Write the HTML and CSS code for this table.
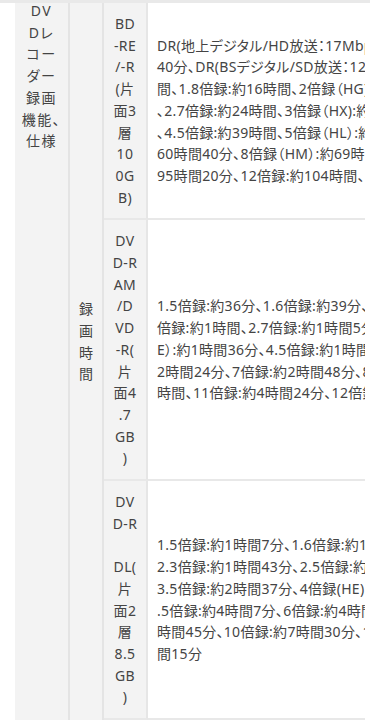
FILE: index.html
```html
<!DOCTYPE html>
<html lang="ja">
<head>
<meta charset="utf-8">
<title>DVDレコーダー録画機能、仕様</title>
<link rel="stylesheet" href="styles.css">
</head>
<body>
<div class="topline"></div>
<div class="frame">
  <div class="scroller">
    <table class="spec">
      <colgroup>
        <col class="c-cat">
        <col class="c-sub">
        <col class="c-media">
        <col class="c-val">
      </colgroup>
      <tbody>
        <tr>
          <th class="cat" rowspan="3"><div class="cat-text">DV<br>Dレ<br>コー<br>ダー<br>録画<br>機能、<br>仕様</div></th>
          <th class="sub" rowspan="3">録画時間</th>
          <th class="media">BD<br>-RE<br>/-R<br>(片<br>面3<br>層<br>10<br>0G<br>B)</th>
          <td class="val">
            <span class="ln">DR(地上デジタル/HD放送：17Mbps時)：約12時間</span>
            <span class="ln">40分、DR(BSデジタル/SD放送：12Mbps時)：約17時</span>
            <span class="ln">間、1.8倍録:約16時間、2倍録（HG)：約18時間、2.5倍録:約22時</span>
            <span class="ln">、2.7倍録:約24時間、3倍録（HX):約26時間、4倍録（HE）:約35時間</span>
            <span class="ln">、4.5倍録:約39時間、5倍録（HL）:約44時間、7倍録:約</span>
            <span class="ln">60時間40分、8倍録（HM）:約69時間20分、11倍録:約</span>
            <span class="ln">95時間20分、12倍録:約104時間、15倍録（HZ）:約130時間</span>
          </td>
        </tr>
        <tr>
          <th class="media">DV<br>D-R<br>AM<br>/D<br>VD<br>-R(<br>片<br>面4<br>.7<br>GB<br>)</th>
          <td class="val">
            <span class="ln">1.5倍録:約36分、1.6倍録:約39分、2倍録（HG）:約48分、2.3</span>
            <span class="ln">倍録:約1時間、2.7倍録:約1時間5分、3倍録（HX）:約1時間12分、4倍録（H</span>
            <span class="ln">E）:約1時間36分、4.5倍録:約1時間48分、5倍録（HL）:約</span>
            <span class="ln">2時間24分、7倍録:約2時間48分、8倍録（HM）:約3時間12分、10倍録:約4</span>
            <span class="ln">時間、11倍録:約4時間24分、12倍録:約4時間48分、15倍録（HZ）:約6時間</span>
          </td>
        </tr>
        <tr>
          <th class="media">DV<br>D-R<br>　<br>DL(<br>片<br>面2<br>層<br>8.5<br>GB<br>)</th>
          <td class="val">
            <span class="ln">1.5倍録:約1時間7分、1.6倍録:約1時間11分、2倍録(HG):約1時間30分、</span>
            <span class="ln">2.3倍録:約1時間43分、2.5倍録:約1時間52分、3倍録(HX):約2時間15分、</span>
            <span class="ln">3.5倍録:約2時間37分、4倍録(HE):約3時間、5</span>
            <span class="ln">.5倍録:約4時間7分、6倍録:約4時間30分、7倍録:約5</span>
            <span class="ln">時間45分、10倍録:約7時間30分、12倍録:約9時間、15倍録(HZ):約11時</span>
            <span class="ln">間15分</span>
          </td>
        </tr>
      </tbody>
    </table>
  </div>
  <div class="thumb"></div>
</div>
</body>
</html>
```

FILE: styles.css
```css
html, body {
  margin: 0;
  padding: 0;
  background: #ffffff;
}

body {
  font-family: "Noto Sans", "Noto Sans CJK JP", sans-serif;
  font-size: 14px;
  font-feature-settings: "palt" 1;
  color: #444444;
  overflow: hidden;
}

.topline {
  height: 3px;
  margin-right: 8px;
  background: #e9e9e9;
}

.frame {
  position: relative;
  margin: 0 13px 0 15px;
}

.scroller {
  overflow: hidden;
}

.spec {
  table-layout: fixed;
  width: 560px;
  border-collapse: separate;
  border-spacing: 0;
  line-height: 21.7px;
}

.c-cat { width: 55px; }
.c-sub { width: 34px; }
.c-media { width: 44px; }
.c-val { width: 427px; }

.spec th {
  font-weight: normal;
  background: #f3f3f3;
  text-align: center;
}

.cat {
  vertical-align: top;
  padding: 0;
  border-right: 2px solid #e4e4e4;
  letter-spacing: 1.5px;
}

.cat-text {
  margin-top: -3px;
}

.sub {
  vertical-align: middle;
  padding: 0 9px 40px;
  border-right: 2px solid #e4e4e4;
}

.media {
  vertical-align: middle;
  padding: 10px 0;
  letter-spacing: 0.4px;
  border-right: 2px solid #e6e6e6;
  border-bottom: 2px solid #e8e8e8;
}

.val {
  vertical-align: middle;
  padding: 10px 0 10px 9px;
  letter-spacing: 0.3px;
  border-bottom: 2px solid #e8e8e8;
  background: #ffffff;
}

.ln {
  display: block;
  white-space: nowrap;
}

.thumb {
  position: absolute;
  right: 2px;
  bottom: -3px;
  width: 45px;
  height: 3px;
  border-radius: 2px;
  background: #a9a9a9;
}
```
